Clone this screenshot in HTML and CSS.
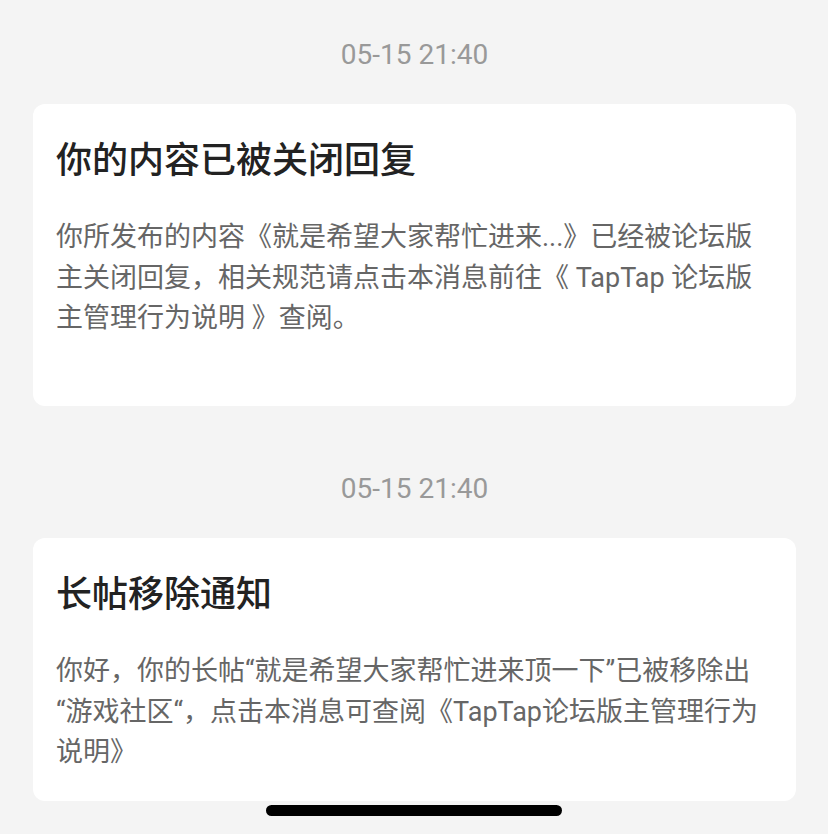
FILE: index.html
```html
<!DOCTYPE html>
<html lang="zh-CN">
<head>
  <meta charset="UTF-8">
  <meta name="viewport" content="width=device-width, initial-scale=1.0">
  <title>消息通知</title>
  <link rel="stylesheet" href="styles.css">
</head>
<body>

  <div class="lista">

    <!-- Mensaje 1 -->
    <div class="mensaje">
      <div class="hora">05-15 21:40</div>
      <div class="tarjeta tarjeta-alta">
        <div class="titulo">你的内容已被关闭回复</div>
        <div class="texto">你所发布的内容《就是希望大家帮忙进来...》已经被论坛版主关闭回复，相关规范请点击本消息前往《 TapTap 论坛版主管理行为说明 》查阅。</div>
      </div>
    </div>

    <!-- Mensaje 2 -->
    <div class="mensaje">
      <div class="hora">05-15 21:40</div>
      <div class="tarjeta">
        <div class="titulo">长帖移除通知</div>
        <div class="texto">你好，你的长帖“就是希望大家帮忙进来顶一下”已被移除出“游戏社区“，点击本消息可查阅《TapTap论坛版主管理行为说明》</div>
      </div>
    </div>

  </div>

  <!-- Barra de inicio del iPhone -->
  <div class="barra-inicio"></div>

</body>
</html>
```

FILE: styles.css
```css
body {
  font-family: 'Roboto', 'Noto Sans CJK SC', sans-serif;
  background-color: #f4f4f4;
  margin: 0;
  padding: 0;
}

.lista {
  padding: 35px 32px 0 33px;
}

.mensaje + .mensaje {
  margin-top: 63px;
}

.hora {
  font-size: 28px;
  line-height: 40px;
  color: #999;
  text-align: center;
  margin-bottom: 29px;
}

.tarjeta {
  box-sizing: border-box;
  background-color: #fff;
  border-radius: 12px;
  padding: 33px 24px 28px 23px;
}

/* la primera tarjeta deja más aire abajo */
.tarjeta-alta {
  min-height: 302px;
}

.titulo {
  font-size: 36px;
  line-height: 49px;
  font-weight: 500;
  color: #222;
  margin-bottom: 31px;
}

.texto {
  font-size: 27px;
  line-height: 40.5px;
  color: #666;
  text-spacing-trim: space-all;
}

.barra-inicio {
  position: fixed;
  left: 266px;
  bottom: 18px;
  width: 296px;
  height: 11px;
  border-radius: 6px;
  background-color: #000;
}
```
